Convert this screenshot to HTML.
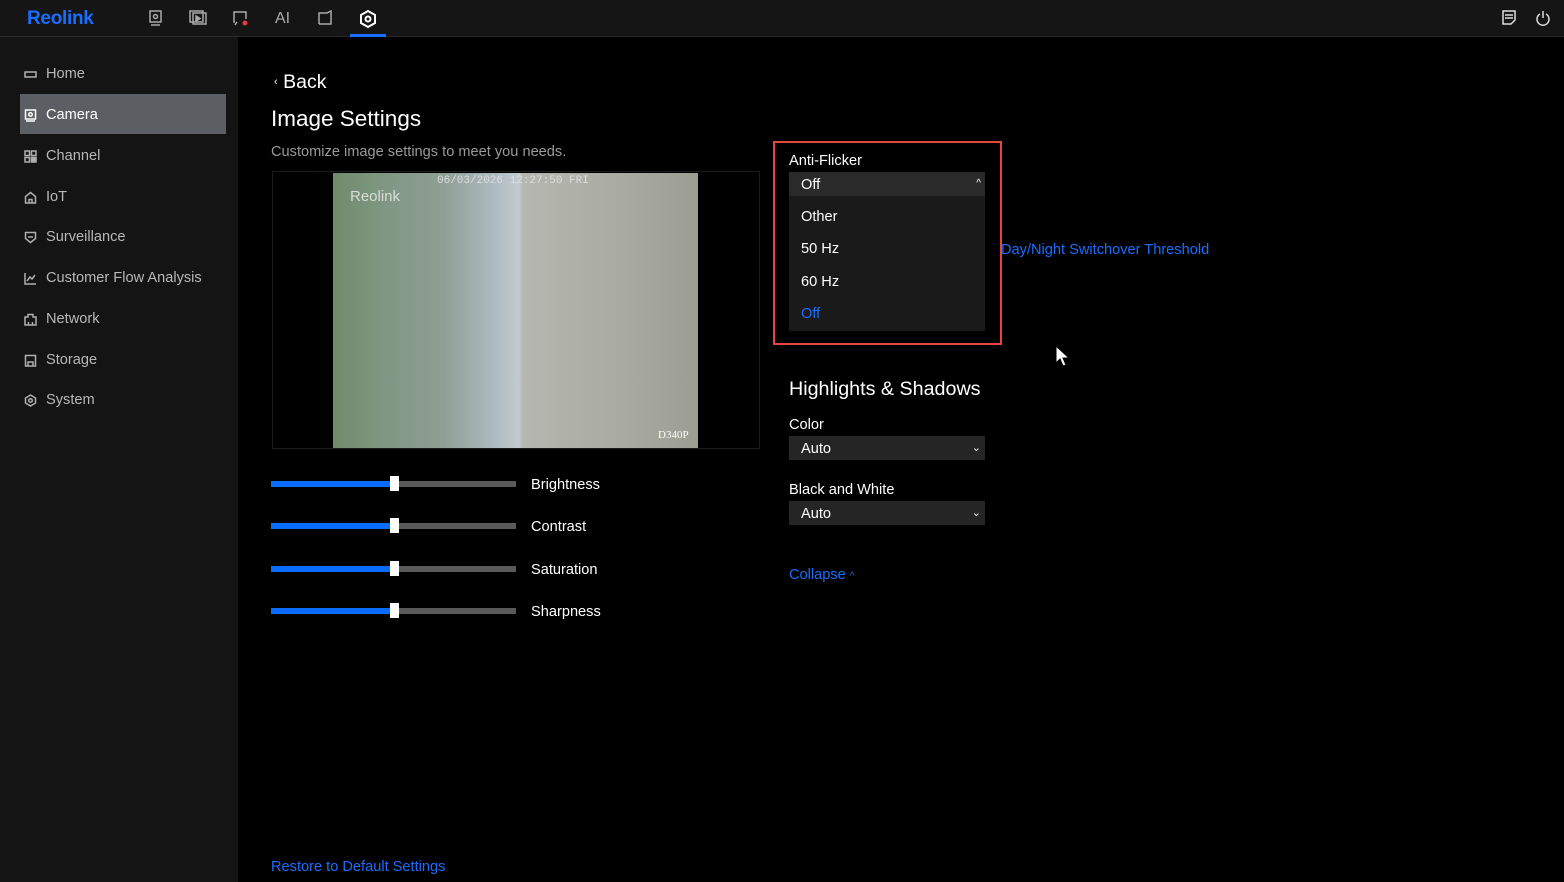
<!DOCTYPE html>
<html><head><meta charset="utf-8"><style>
*{margin:0;padding:0;box-sizing:border-box}
body{width:1564px;height:882px;background:#000;font-family:"Liberation Sans",sans-serif;color:#fff;position:relative;overflow:hidden}
.abs{position:absolute}
.top{left:0;top:0;width:1564px;height:37px;background:#151515;border-bottom:1px solid #2a2a2a}
.side{left:0;top:37px;width:238px;height:845px;background:#141414}
.nav{position:absolute;left:24px;font-size:14.6px;line-height:17px;color:#b8b8b8;display:flex;align-items:center;gap:9px}
.nav svg{width:13px;height:13px}
.sl{position:absolute;left:271px;width:245px;height:6px;background:#5a5a5a}
.sl b{position:absolute;left:0;top:0;width:123px;height:6px;background:#0a6cff}
.sl s{position:absolute;left:119px;top:-5px;width:9px;height:15px;background:#fff}
.lab{position:absolute;left:531px;font-size:14.6px}
.sel{position:absolute;left:789px;width:196px;height:24px;background:#252525;font-size:14.6px;padding:5px 12px}
.car{position:absolute;right:4px;top:5px}
</style></head><body>
<div class="abs top"></div>
<div class="abs" style="left:27px;top:8px;font-size:19px;font-weight:bold;color:#1a6dff;letter-spacing:-0.3px">Reolink</div>
<svg class="abs" style="left:148px;top:10px" width="250" height="20" fill="none" stroke="#aaa" stroke-width="1.5">
<rect x="2" y="1" width="11" height="11"/><circle cx="7.5" cy="6.5" r="2"/><line x1="3" y1="15" x2="12" y2="15"/>
<rect x="45" y="3" width="13" height="11"/><rect x="42" y="1" width="13" height="11"/><path d="M48 6l4 2.5-4 2.5z" fill="#aaa"/>
<path d="M87 12h-1v-10h12v7"/><path d="M89 12l-2 3"/><circle cx="97" cy="13" r="2.5" fill="#e63b3b" stroke="none"/>
<path d="M171 14v-11h8l4-2v13h-12"/>
</svg>
<div class="abs" style="left:275px;top:10px;font-size:16px;color:#aaa">AI</div>
<svg class="abs" style="left:359px;top:10px" width="18" height="18" fill="none" stroke="#fff" stroke-width="2"><path d="M9 1l7 4v8l-7 4-7-4v-8z"/><circle cx="9" cy="9" r="2.5"/></svg>
<div class="abs" style="left:350px;top:34px;width:36px;height:3px;background:#1a6dff"></div>
<svg class="abs" style="left:1502px;top:10px" width="50" height="16" fill="none" stroke="#ddd" stroke-width="1.5"><path d="M1 1h12v9l-4 4h-8z M3 5h8 M3 8h8"/><path d="M38 4a6 6 0 1 0 6 0 M41 1v7"/></svg>
<div class="abs side"></div>
<div class="abs" style="left:20px;top:94px;width:206px;height:40px;background:#5b5e63"></div>
<div class="nav" style="top:66px"><svg fill="none" stroke="#b0b0b0" stroke-width="1.5"><rect x="1" y="4" width="11" height="5"/></svg>Home</div>
<div class="nav" style="top:107px;color:#fff"><svg fill="none" stroke="#fff" stroke-width="1.5"><rect x="1.5" y="1" width="10" height="9"/><circle cx="6.5" cy="5.5" r="1.8"/><line x1="2" y1="12" x2="11" y2="12"/></svg>Camera</div>
<div class="nav" style="top:148px"><svg fill="none" stroke="#b0b0b0" stroke-width="1.5"><rect x="1" y="1" width="4.5" height="4.5"/><rect x="7.5" y="1" width="4.5" height="4.5"/><rect x="1" y="7.5" width="4.5" height="4.5"/><rect x="7.5" y="7.5" width="4.5" height="4.5" fill="#b0b0b0"/></svg>Channel</div>
<div class="nav" style="top:189px"><svg fill="none" stroke="#b0b0b0" stroke-width="1.5"><path d="M1.5 12V5.5L6.5 1.5l5 4V12z M5 12V8.5h3V12"/></svg>IoT</div>
<div class="nav" style="top:229px"><svg fill="none" stroke="#b0b0b0" stroke-width="1.5"><path d="M1.5 1.5h10v6l-5 4-5-4z M4 6h5"/></svg>Surveillance</div>
<div class="nav" style="top:270px"><svg fill="none" stroke="#b0b0b0" stroke-width="1.5"><path d="M1 1v11h11 M3 9l3-4 2 2 3-4"/></svg>Customer Flow Analysis</div>
<div class="nav" style="top:311px"><svg fill="none" stroke="#b0b0b0" stroke-width="1.5"><path d="M1 12V4h3V1.5h5V4h3v8z M4.5 12V9 M8.5 12V9"/></svg>Network</div>
<div class="nav" style="top:352px"><svg fill="none" stroke="#b0b0b0" stroke-width="1.5"><path d="M1.5 12V1.5h10V12z M4 12V8h5v4"/></svg>Storage</div>
<div class="nav" style="top:392px"><svg fill="none" stroke="#b0b0b0" stroke-width="1.5"><path d="M6.5 1l5 3v5l-5 3-5-3V4z"/><circle cx="6.5" cy="6.5" r="1.8"/></svg>System</div>

<div class="abs" style="left:274px;top:71px;font-size:19.5px"><span style="font-size:11px;vertical-align:3px">‹</span> Back</div>
<div class="abs" style="left:271px;top:106px;font-size:22.5px">Image Settings</div>
<div class="abs" style="left:271px;top:144px;font-size:14.6px;color:#9a9a9a">Customize image settings to meet you needs.</div>
<div class="abs" style="left:272px;top:171px;width:488px;height:278px;border:1px solid #1c1c1c;background:#000"></div>
<div class="abs" style="left:333px;top:173px;width:365px;height:275px;background:linear-gradient(90deg,#6f8b6a 0%,#7d9680 12%,#8e9e94 30%,#b0bcc4 45%,#c2cbd0 51%,#b6b7b0 52%,#a9aaa0 80%,#9c9e92 100%)"></div>
<div class="abs" style="left:437px;top:175px;font-size:11px;font-family:'Liberation Mono',monospace;color:#ddd">06/03/2026 12:27:50 FRI</div>
<div class="abs" style="left:350px;top:188px;font-size:15px;color:#d8ddd8">Reolink</div>
<div class="abs" style="left:658px;top:429px;font-size:11px;font-family:'Liberation Serif',serif;color:#fff">D340P</div>

<div class="sl" style="top:481px"><b></b><s></s></div>
<div class="sl" style="top:523px"><b></b><s></s></div>
<div class="sl" style="top:566px"><b></b><s></s></div>
<div class="sl" style="top:608px"><b></b><s></s></div>
<div class="lab" style="top:477px">Brightness</div>
<div class="lab" style="top:519px">Contrast</div>
<div class="lab" style="top:562px">Saturation</div>
<div class="lab" style="top:604px">Sharpness</div>

<div class="abs" style="left:773px;top:141px;width:229px;height:204px;border:2px solid #e8463c"></div>
<div class="abs" style="left:789px;top:153px;font-size:14.6px">Anti-Flicker</div>
<div class="sel" style="top:172px;background:#2a2a2a">Off<span class="car" style="font-size:10px;top:6px">^</span></div>
<div class="abs" style="left:789px;top:196px;width:196px;height:135px;background:#1a1a1a;font-size:14.6px">
<div class="abs" style="left:12px;top:13px">Other</div>
<div class="abs" style="left:12px;top:45px">50 Hz</div>
<div class="abs" style="left:12px;top:78px">60 Hz</div>
<div class="abs" style="left:12px;top:110px;color:#1a6dff">Off</div>
</div>
<div class="abs" style="left:1001px;top:242px;font-size:14.6px;color:#1a6dff">Day/Night Switchover Threshold</div>
<div class="abs" style="left:789px;top:378px;font-size:19.7px">Highlights &amp; Shadows</div>
<div class="abs" style="left:789px;top:417px;font-size:14.6px">Color</div>
<div class="sel" style="top:436px">Auto<span class="car" style="font-size:11px">⌄</span></div>
<div class="abs" style="left:789px;top:482px;font-size:14.6px">Black and White</div>
<div class="sel" style="top:501px">Auto<span class="car" style="font-size:11px">⌄</span></div>
<div class="abs" style="left:789px;top:567px;font-size:14.6px;color:#1a6dff">Collapse <span style="font-size:10px">^</span></div>
<svg class="abs" style="left:1055px;top:345px" width="16" height="24"><path d="M1 1v17l4-4 3 7 3-1-3-7h6z" fill="#fff" stroke="#000"/></svg>
<div class="abs" style="left:271px;top:859px;font-size:14.6px;color:#1a6dff">Restore to Default Settings</div>
</body></html>
